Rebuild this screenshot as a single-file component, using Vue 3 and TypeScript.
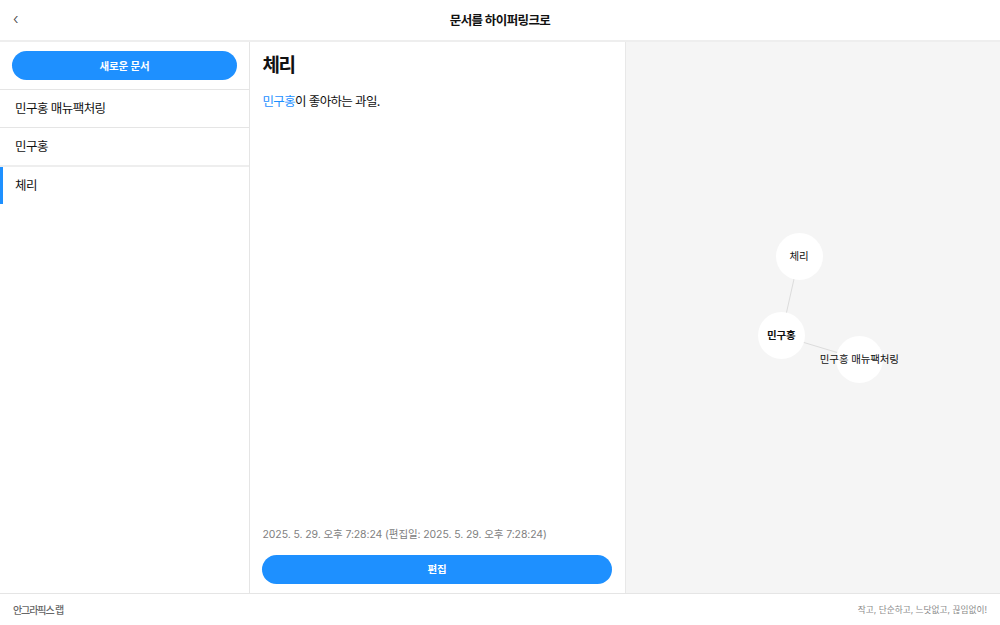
<template>
  <div class="app">
    <header class="top">
      <span class="back">‹</span>
      <h1>문서를 하이퍼링크로</h1>
    </header>
    <main class="body">
      <aside class="side">
        <div class="side-action">
          <button class="btn">새로운 문서</button>
        </div>
        <ul class="doc-list">
          <li v-for="doc in docs" :key="doc.title" :class="{ active: doc.active }">{{ doc.title }}</li>
        </ul>
      </aside>
      <section class="doc">
        <h2>체리</h2>
        <p class="content"><a class="link">민구홍</a>이 좋아하는 과일.</p>
        <div class="doc-foot">
          <p class="meta">2025. 5. 29. 오후 7:28:24 (편집일: 2025. 5. 29. 오후 7:28:24)</p>
          <button class="btn">편집</button>
        </div>
      </section>
      <section class="graph">
        <svg class="edges" width="374" height="552">
          <line v-for="edge in edges" :key="edge.id" :x1="edge.x1" :y1="edge.y1" :x2="edge.x2" :y2="edge.y2" />
        </svg>
        <div
          v-for="node in nodes"
          :key="node.label"
          class="node"
          :class="{ current: node.current }"
          :style="{ left: node.x + 'px', top: node.y + 'px' }"
        >
          <span>{{ node.label }}</span>
        </div>
      </section>
    </main>
    <footer class="bottom">
      <span class="logo">안그라픽스 랩</span>
      <span class="slogan">작고, 단순하고, 느닷없고, 끊임없이!</span>
    </footer>
  </div>
</template>

<script setup lang="ts">
const docs = [
  { title: '민구홍 매뉴팩처링', active: false },
  { title: '민구홍', active: false },
  { title: '체리', active: true },
];

// graph coordinates are relative to the panel (626, 42)
const nodes = [
  { label: '체리', x: 173, y: 214.7, current: false },
  { label: '민구홍', x: 155.3, y: 293.7, current: true },
  { label: '민구홍 매뉴팩처링', x: 233.3, y: 317.2, current: false },
];

const edges = [
  { id: 'a', x1: 173, y1: 214.7, x2: 155.3, y2: 293.7 },
  { id: 'b', x1: 155.3, y1: 293.7, x2: 233.3, y2: 317.2 },
];
</script>

<style>
html,
body {
  margin: 0;
  background: #fff;
}
</style>

<style scoped>
.app {
  width: 1000px;
  height: 625px;
  display: flex;
  flex-direction: column;
  overflow: hidden;
  font-family: Inter, "Noto Sans CJK KR", sans-serif;
  color: #111;
}

.top {
  height: 40px;
  flex: none;
  border-bottom: 2px solid #eee;
  display: flex;
  align-items: center;
  justify-content: center;
  position: relative;
}

.top h1 {
  margin: 0 0 2px;
  font-size: 12.5px;
  font-weight: 700;
  letter-spacing: -0.6px;
}

.back {
  position: absolute;
  left: 13px;
  top: 9px;
  font-size: 15px;
  line-height: 20px;
  font-weight: 300;
  color: #444;
}

.body {
  flex: 1;
  display: flex;
  min-height: 0;
}

.side {
  width: 250px;
  flex: none;
  box-sizing: border-box;
  border-right: 1px solid #e5e5e5;
}

.side-action {
  padding: 9px 12px;
}

.btn {
  display: block;
  width: 100%;
  height: 29px;
  border: 0;
  border-radius: 15px;
  padding: 0 0 1px;
  background: #1e90ff;
  color: #fff;
  font-family: inherit;
  font-size: 10.5px;
  font-weight: 700;
  letter-spacing: -0.1px;
}

.doc-list {
  list-style: none;
  margin: 0;
  padding: 0;
}

.doc-list li {
  height: 37px;
  line-height: 38px;
  padding-left: 15px;
  border-top: 1px solid #e5e5e5;
  font-size: 12.5px;
  letter-spacing: -0.55px;
}

.doc-list li.active {
  border-top: 2px solid #eee;
  box-shadow: inset 3px 0 0 #1e90ff;
  line-height: 37px;
}

.doc {
  width: 375px;
  flex: none;
  box-sizing: border-box;
  padding: 0 13px 9px 12px;
  display: flex;
  flex-direction: column;
}

.doc h2 {
  margin: 11px 0 0 0.5px;
  font-size: 19px;
  line-height: 26px;
  font-weight: 700;
  letter-spacing: -1.4px;
}

.content {
  margin: 13px 0 0 0.5px;
  font-size: 12.5px;
  line-height: 20px;
  letter-spacing: -0.65px;
}

.link {
  color: #1e90ff;
}

.doc-foot {
  margin-top: auto;
}

.doc-foot .btn {
  padding-bottom: 3px;
}

.meta {
  margin: 0 0 12px 0.5px;
  font-size: 10.5px;
  line-height: 16px;
  letter-spacing: -0.1px;
  color: #808080;
}

.graph {
  flex: 1;
  position: relative;
  background: #f5f5f5;
  border-left: 1px solid #e8e8e8;
}

.edges {
  position: absolute;
  left: 0;
  top: 0;
}

.edges line {
  stroke: #dcdcdc;
  stroke-width: 1;
}

.node {
  position: absolute;
  width: 47px;
  height: 47px;
  margin: -23.5px 0 0 -23.5px;
  border-radius: 50%;
  background: #fff;
  display: flex;
  align-items: center;
  justify-content: center;
  font-size: 10.5px;
  letter-spacing: -0.15px;
  white-space: nowrap;
}

.node span {
  margin-top: -2px;
}

.node.current {
  font-weight: 700;
}

.bottom {
  height: 31px;
  flex: none;
  border-top: 1px solid #e5e5e5;
  padding: 0 13px;
  display: flex;
  align-items: center;
  justify-content: space-between;
}

.logo {
  font-size: 10px;
  font-weight: 500;
  color: #666;
  letter-spacing: -1.1px;
  margin-bottom: 1px;
}

.slogan {
  font-size: 8.7px;
  color: #8a8a8a;
  margin-bottom: 1px;
}
</style>
